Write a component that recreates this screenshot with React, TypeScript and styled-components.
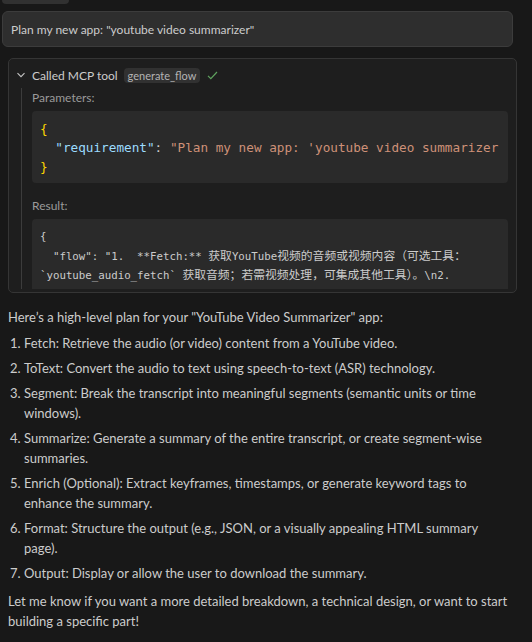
import React from 'react';
import styled, { createGlobalStyle } from 'styled-components';

const GlobalStyle = createGlobalStyle`
  html, body {
    margin: 0;
    padding: 0;
    background: #181818;
  }
  body {
    font-family: Lato, "Noto Sans", sans-serif;
    color: #cccccc;
    font-size: 13px;
  }
`;

const Page = styled.div`
  width: 532px;
  height: 642px;
  overflow: hidden;
  background: #181818;
  display: flex;
  flex-direction: column;
`;

const PrevBubble = styled.div`
  margin-left: 2px;
  width: 67px;
  height: 4px;
  background: #313131;
  border-radius: 0 0 5px 5px;
`;

const UserBubble = styled.div`
  margin: 7px 19px 0 2px;
  height: 36px;
  box-sizing: border-box;
  border: 1px solid #3c3c3c;
  background: #2e2e2e;
  border-radius: 6px;
  display: flex;
  align-items: center;
  padding: 0 8px;
  font-size: 12px;
  color: #cccccc;
`;

const ToolBox = styled.div`
  margin: 11px 15px 0 8px;
  border: 1px solid #353535;
  border-radius: 5px;
  background: #1e1e1e;
  padding: 6px 0 3px;
`;

const ToolHeader = styled.div`
  display: flex;
  align-items: center;
  height: 20px;
  padding-left: 7px;
  gap: 6px;
`;

const HeaderTitle = styled.span`
  font-size: 12px;
  color: #cccccc;
`;

const Badge = styled.span`
  font-size: 11px;
  color: #b4b4b4;
  background: #313131;
  border-radius: 4px;
  height: 15px;
  line-height: 15px;
  padding: 0 4px;
  margin-right: 1px;
`;

const ToolBody = styled.div`
  margin: 3px 0 0 12px;
  border-left: 1px solid #3c3c3c;
  height: 199px;
  overflow: hidden;
  padding: 2px 8px 0 10px;
`;

const Label = styled.div<{ $top?: number }>`
  font-size: 12px;
  line-height: 16px;
  color: #9a9a9a;
  margin: ${(p) => p.$top ?? 0}px 0 5px;
`;

const Code = styled.div<{ $pad: string }>`
  background: #2a2a2a;
  border-radius: 4px;
  padding: ${(p) => p.$pad};
`;

const CodeText = styled.pre<{ $size: number; $line: number }>`
  margin: 0;
  font-family: "DejaVu Sans Mono", "Liberation Mono", "Noto Sans CJK SC", monospace;
  font-size: ${(p) => p.$size}px;
  line-height: ${(p) => p.$line}px;
  color: #cccccc;
  white-space: pre;
  overflow: hidden;
`;

const Brace = styled.span`
  color: #ffd700;
`;

const Key = styled.span`
  color: #9cdcfe;
`;

const Str = styled.span`
  color: #ce9178;
`;

const Cjk = styled.span`
  font-family: "Noto Sans CJK SC", sans-serif;
  font-size: 11.8px;
`;

const Answer = styled.div`
  padding: 14px 24px 0 8px;
  font-size: 13px;
  line-height: 20px;
`;

const Para = styled.p`
  margin: 0;
`;

const Steps = styled.ol`
  margin: 6px 0 8px;
  padding-left: 16px;
`;

const Step = styled.li`
  margin-bottom: 5px;
  &:last-child {
    margin-bottom: 0;
  }
`;

const Chevron = () => (
  <svg width="10" height="10" viewBox="0 0 10 10" fill="none">
    <path d="M1.5 3.2 5 6.7l3.5-3.5" stroke="#c5c5c5" strokeWidth="1.1" />
  </svg>
);

const Check = () => (
  <svg width="11" height="11" viewBox="0 0 11 11" fill="none">
    <path d="M1 5.8 3.8 8.6 10 2" stroke="#5fa35f" strokeWidth="1.2" />
  </svg>
);

const steps = [
  'Fetch: Retrieve the audio (or video) content from a YouTube video.',
  'ToText: Convert the audio to text using speech-to-text (ASR) technology.',
  'Segment: Break the transcript into meaningful segments (semantic units or time windows).',
  'Summarize: Generate a summary of the entire transcript, or create segment-wise summaries.',
  'Enrich (Optional): Extract keyframes, timestamps, or generate keyword tags to enhance the summary.',
  'Format: Structure the output (e.g., JSON, or a visually appealing HTML summary page).',
  'Output: Display or allow the user to download the summary.',
];

export default function App() {
  return (
    <Page>
      <GlobalStyle />
      <PrevBubble />
      <UserBubble>Plan my new app: "youtube video summarizer"</UserBubble>
      <ToolBox>
        <ToolHeader>
          <Chevron />
          <HeaderTitle>Called MCP tool</HeaderTitle>
          <Badge>generate_flow</Badge>
          <Check />
        </ToolHeader>
        <ToolBody>
          <Label>Parameters:</Label>
          <Code $pad="8px 8px 7px">
            <CodeText $size={12.7} $line={19}>
              <Brace>{'{'}</Brace>
              {'\n  '}
              <Key>"requirement"</Key>
              {': '}
              <Str>"Plan my new app: 'youtube video summarizer'"</Str>
              {'\n'}
              <Brace>{'}'}</Brace>
            </CodeText>
          </Code>
          <Label $top={15}>Result:</Label>
          <Code $pad="9px 8px">
            <CodeText $size={10.75} $line={17.5}>
              {'{\n  "flow": "1.  **Fetch:** '}
              <Cjk>获取</Cjk>
              {'YouTube'}
              <Cjk>视频的音频或视频内容（可选工具：</Cjk>
              {'\n`youtube_audio_fetch` '}
              <Cjk>获取音频；若需视频处理，可集成其他工具）。</Cjk>
              {'\\n2.\n            '}
              <Cjk>将音频转换为文本，推荐使用语音识别技术（可选工具：</Cjk>
              {'\n}'}
            </CodeText>
          </Code>
        </ToolBody>
      </ToolBox>
      <Answer>
        <Para>Here’s a high-level plan for your "YouTube Video Summarizer" app:</Para>
        <Steps>
          {steps.map((s) => (
            <Step key={s}>{s}</Step>
          ))}
        </Steps>
        <Para>
          Let me know if you want a more detailed breakdown, a technical design, or want to start
          building a specific part!
        </Para>
      </Answer>
    </Page>
  );
}
